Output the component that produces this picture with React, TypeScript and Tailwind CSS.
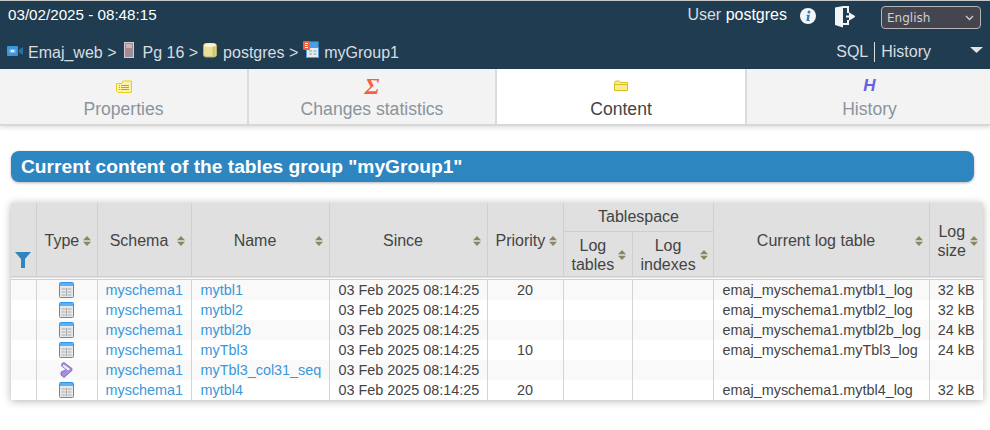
function TableIcon() {
  return (
    <svg width="15" height="16" viewBox="0 0 15 16" className="mx-auto block" aria-hidden>
      <rect x="0.5" y="0.5" width="14" height="15" rx="1" fill="#e6e8ea" stroke="#2f96ee" />
      <rect x="1" y="1" width="13" height="3" fill="#5fb0f2" />
      <path d="M2.5 7h4M8.5 7h4M2.5 10h4M8.5 10h4M2.5 13h4M8.5 13h4M7.5 6v8" stroke="#aaa" fill="none" />
    </svg>
  )
}

function SeqIcon() {
  return (
    <svg width="13" height="16" viewBox="0 0 13 16" className="mx-auto block" aria-hidden>
      <path d="M2 1.5 L4 0.5 L12 6.5 L12 8.5 L4 15.5 L1 13 L1 10 L6.5 7.5 L1.5 4 Z" fill="#a68fd8" stroke="#7a5fc0" strokeWidth="0.8" />
      <path d="M3.5 2.5 L10 7 L8 8.5 L2.5 4Z" fill="#f4f0fb" />
    </svg>
  )
}

function Sort() {
  return (
    <svg width="8" height="10" viewBox="0 0 8 10" className="shrink-0" aria-hidden>
      <path d="M4 0 L8 4.2 H0 Z M4 10 L0 5.8 H8 Z" fill="#8b8660" />
    </svg>
  )
}

function Head({ label }: { label: React.ReactNode }) {
  return (
    <div className="flex items-center justify-between gap-1 pt-[2px]">
      <span className="flex-1 text-center">{label}</span>
      <Sort />
    </div>
  )
}

const tabs = [
  { name: 'Properties', active: false, width: 'w-[247px]' },
  { name: 'Changes statistics', active: false, width: 'w-[246px]' },
  { name: 'Content', active: true, width: 'w-[248px]' },
  { name: 'History', active: false, width: 'flex-1 pl-[2px]' },
]

function TabIcon({ name }: { name: string }) {
  if (name === 'Properties')
    return (
      <svg width="16" height="13" viewBox="0 0 16 13" aria-hidden>
        <path d="M0.5 3.5H6L7 1H15.5V12.5H2L0.5 11Z" fill="#fdf3a8" stroke="#e8cf1e" />
        <path d="M3 5.5h1M5 5.5h8M3 7.5h1M5 7.5h8M3 9.5h1M5 9.5h8" stroke="#b9a91f" fill="none" />
      </svg>
    )
  if (name === 'Changes statistics')
    return <span className="font-['Liberation_Serif',serif] text-[24px] font-bold italic leading-[16px] text-[#f4623a]">Σ</span>
  if (name === 'Content')
    return (
      <svg width="15" height="12" viewBox="0 0 15 12" aria-hidden>
        <path d="M0.5 2.5 L1.5 1H5.5L6.5 2.5H13.5V10.5H0.5Z" fill="#f7ec8f" stroke="#d9bf22" />
        <path d="M1 4.5H14" stroke="#d9bf22" fill="none" />
      </svg>
    )
  return <span className="font-['Liberation_Sans',sans-serif] text-[17px] font-bold italic leading-[16px] text-[#6a5fe0]">H</span>
}

const rows = [
  { seq: false, name: 'mytbl1', prio: '20', log: 'emaj_myschema1.mytbl1_log', size: '32 kB' },
  { seq: false, name: 'mytbl2', prio: '', log: 'emaj_myschema1.mytbl2_log', size: '32 kB' },
  { seq: false, name: 'mytbl2b', prio: '', log: 'emaj_myschema1.mytbl2b_log', size: '24 kB' },
  { seq: false, name: 'myTbl3', prio: '10', log: 'emaj_myschema1.myTbl3_log', size: '24 kB' },
  { seq: true, name: 'myTbl3_col31_seq', prio: '', log: '', size: '' },
  { seq: false, name: 'mytbl4', prio: '20', log: 'emaj_myschema1.mytbl4_log', size: '32 kB' },
]

const th = 'border-r border-[#cfcfcf] bg-[#e0e0e0] font-normal'
const td = 'h-5 border-r border-[#d4d4d4] p-0 leading-5'

export default function App() {
  return (
    <div className="h-[430px] w-[990px] overflow-hidden bg-white font-['Liberation_Sans',Arial,sans-serif] text-[#444]">
      <header className="h-[69px] border-t border-[#c8c8c8] bg-[#203c50] text-[#d8dde0]">
        <div className="flex h-[39px] items-start">
          <div className="pl-2 pt-[5px] text-[15.2px] leading-[18px] text-white">03/02/2025 - 08:48:15</div>
          <div className="ml-auto flex items-start">
            <div className="pt-1 text-[16px] leading-[20px]">
              User <span className="text-white">postgres</span>
            </div>
            <svg width="16" height="16" viewBox="0 0 16 16" className="ml-[13px] mt-[7px]" aria-hidden>
              <circle cx="8" cy="8" r="8" fill="#f4f6f8" />
              <circle cx="9" cy="4" r="1.5" fill="#2d7fc0" />
              <path d="M6.6 6.8H9.8L8.9 12H10L9.7 13H6.4L7.3 7.8H6.4Z" fill="#2d7fc0" />
            </svg>
            <svg width="20" height="22" viewBox="0 0 20 22" className="ml-[19px] mt-[5px]" aria-hidden>
              <path d="M0 1.5 L8 0 V21.5 L0 19 Z" fill="#f2f4f6" />
              <path d="M8 1H13V7M13 14V18H8" stroke="#f2f4f6" strokeWidth="2" fill="none" />
              <path d="M11 10.5H16.5M15 8 L19 10.5 L15 13 Z" stroke="#f2f4f6" strokeWidth="2" fill="#f2f4f6" />
            </svg>
            <div className="ml-[26px] mr-[9px] mt-[5px] flex h-[23px] w-[100px] items-center justify-between rounded-[4px] border border-[#b5b5b5] bg-[#454550] pl-[5px] pr-[6px] font-['DejaVu_Sans',sans-serif] text-[12px] text-[#d0d0d0]">
              English
              <svg width="9" height="6" viewBox="0 0 9 6" aria-hidden>
                <path d="M1 1 L4.5 4.5 L8 1" stroke="#d0d0d0" strokeWidth="1.3" fill="none" />
              </svg>
            </div>
          </div>
        </div>
        <div className="flex h-[29px] items-center text-[16px]">
          <div className="flex items-center pb-1 pl-[7px]">
            <svg width="16" height="10" viewBox="0 0 16 10" className="mr-[5px] -mt-1" aria-hidden>
              <rect width="11" height="10" rx="1" fill="#3a97dc" />
              <path d="M12 3.5 L16 1V9L12 6.5Z" fill="#2c6f9f" />
              <path d="M3 3V7M8 3V7M3.5 5L5.2 3.5V6.5ZM7.5 5L5.8 3.5V6.5Z" fill="#fff" stroke="#fff" strokeWidth="0.4" />
            </svg>
            <span>Emaj_web &gt;</span>
            <svg width="10" height="16" viewBox="0 0 10 16" className="ml-[7px] mr-[9px] -mt-[6px]" aria-hidden>
              <rect x="0.5" y="0.5" width="9" height="15" fill="#a88a96" stroke="#d9c8cf" />
              <path d="M2 3H8M2 5H8" stroke="#e8dde2" />
              <path d="M5 12H9V14H5Z" fill="#5fa8b0" />
            </svg>
            <span>Pg 16 &gt;</span>
            <svg width="14" height="16" viewBox="0 0 14 16" className="ml-[5px] mr-[6px] -mt-[6px]" aria-hidden>
              <rect x="0.5" y="1.5" width="13" height="13.5" rx="2.5" fill="#e9df9a" stroke="#b8ad62" />
              <ellipse cx="7" cy="3" rx="6" ry="2" fill="#fbf6cd" />
              <rect x="9.5" y="4.5" width="3" height="9.5" fill="#cfc37a" />
            </svg>
            <span>postgres &gt;</span>
            <svg width="16" height="17" viewBox="0 0 16 17" className="mx-[5px] -mt-[6px]" aria-hidden>
              <rect x="3.5" y="0.5" width="12" height="14" fill="#4a9ee2" />
              <rect x="3.5" y="6.5" width="12" height="10" fill="#e8ecf0" stroke="#4a9ee2" />
              <path d="M6 10h3M10.5 10h3M6 13h3M10.5 13h3" stroke="#999" />
              <rect x="0" y="0" width="7" height="9" rx="1" fill="#f4623a" />
              <path d="M2 2.5H5M2 4.5H4.5M2 6.5H5" stroke="#fff" />
            </svg>
            <span>myGroup1</span>
          </div>
          <div className="ml-auto flex items-center pb-[6px]">
            <span className="border-r border-[#d8dde0] pr-[6px] leading-5">SQL</span>
            <span className="pl-[6px]">History</span>
            <svg width="13" height="6" viewBox="0 0 13 6" className="mb-[3px] ml-[39px] mr-[7px]" aria-hidden>
              <path d="M0 0H13L6.5 6Z" fill="#dfe3e6" />
            </svg>
          </div>
        </div>
      </header>

      <nav className="flex h-[57px] gap-[2px] border-b-2 border-[#d8d8d8] bg-[#dcdcdc] shadow-[0_2px_4px_rgba(0,0,0,0.12)]">
        {tabs.map((t) => (
          <div
            key={t.name}
            className={`flex h-[55px] flex-col items-center pt-[9px] text-[17.6px] ${t.width} ${t.active ? 'bg-white text-[#444]' : 'bg-[#f3f3f3] text-[#8a949c]'}`}
          >
            <div className="flex h-4 items-center">
              <TabIcon name={t.name} />
            </div>
            <div className="mt-[5px] leading-[21px]">{t.name}</div>
          </div>
        ))}
      </nav>

      <div className="mx-[11px] mt-[25px] h-[31px] w-[963px] rounded-lg bg-[#2e86c1] pl-[10px] text-[19.2px] font-bold leading-[31px] text-white shadow-[0_1px_3px_rgba(0,0,0,0.3)]">
        Current content of the tables group "myGroup1"
      </div>

      <div className="ml-[11px] mt-[21px] w-[972px] shadow-[0_1px_8px_rgba(0,0,0,0.3)]">
        <table className="w-[972px] table-fixed border-collapse bg-white text-[14.4px]">
          <colgroup>
            <col className="w-[25px]" />
            <col className="w-[61px]" />
            <col className="w-[94px]" />
            <col className="w-[138px]" />
            <col className="w-[158px]" />
            <col className="w-[76px]" />
            <col className="w-[69px]" />
            <col className="w-[81px]" />
            <col className="w-[216px]" />
            <col className="w-[54px]" />
          </colgroup>
          <thead className="text-[16px] leading-[19px] text-[#444]">
            <tr className="h-[28px]">
              <th rowSpan={2} className={`${th} px-0 pb-[8px] align-bottom`}>
                <svg width="16" height="16" viewBox="0 0 16 16" className="mx-auto block" aria-hidden>
                  <path d="M0 0H16L10 7V16H6V7Z" fill="#2e86c1" />
                </svg>
              </th>
              <th rowSpan={2} className={`${th} pl-[8px] pr-[6px]`}><Head label="Type" /></th>
              <th rowSpan={2} className={`${th} pl-[8px] pr-[6px]`}><Head label="Schema" /></th>
              <th rowSpan={2} className={`${th} pl-[8px] pr-[6px]`}><Head label="Name" /></th>
              <th rowSpan={2} className={`${th} pl-[8px] pr-[6px]`}><Head label="Since" /></th>
              <th rowSpan={2} className={`${th} pl-[8px] pr-[6px]`}><Head label="Priority" /></th>
              <th colSpan={2} className={`${th} border-b border-b-[#cfcfcf] pl-px`}>Tablespace</th>
              <th rowSpan={2} className={`${th} pl-[8px] pr-[6px]`}><Head label="Current log table" /></th>
              <th rowSpan={2} className="bg-[#e0e0e0] pl-[8px] pr-[5px] font-normal"><Head label={<>Log<br />size</>} /></th>
            </tr>
            <tr className="h-[47px]">
              <th className={`${th} pl-[8px] pr-[6px]`}><Head label={<>Log<br />tables</>} /></th>
              <th className={`${th} pl-[8px] pr-[6px]`}><Head label={<>Log<br />indexes</>} /></th>
            </tr>
          </thead>
          <tbody className="border-t-[4px] border-double border-[#d0d0d0] text-[#444]">
            {rows.map((r, i) => (
              <tr key={i} className={i % 2 === 0 ? 'bg-[#f9f9f9]' : 'bg-white'}>
                <td className={td} />
                <td className={td}>{r.seq ? <SeqIcon /> : <TableIcon />}</td>
                <td className={`${td} pl-2 text-[#3a97dc]`}>myschema1</td>
                <td className={`${td} pl-[9px] text-[#3a97dc]`}>{r.name}</td>
                <td className={`${td} pl-[9px]`}>03 Feb 2025 08:14:25</td>
                <td className={`${td} text-center`}>{r.prio}</td>
                <td className={td} />
                <td className={td} />
                <td className={`${td} pl-[9px]`}>{r.log}</td>
                <td className="h-5 p-0 text-center leading-5">{r.size}</td>
              </tr>
            ))}
          </tbody>
        </table>
      </div>
    </div>
  )
}
